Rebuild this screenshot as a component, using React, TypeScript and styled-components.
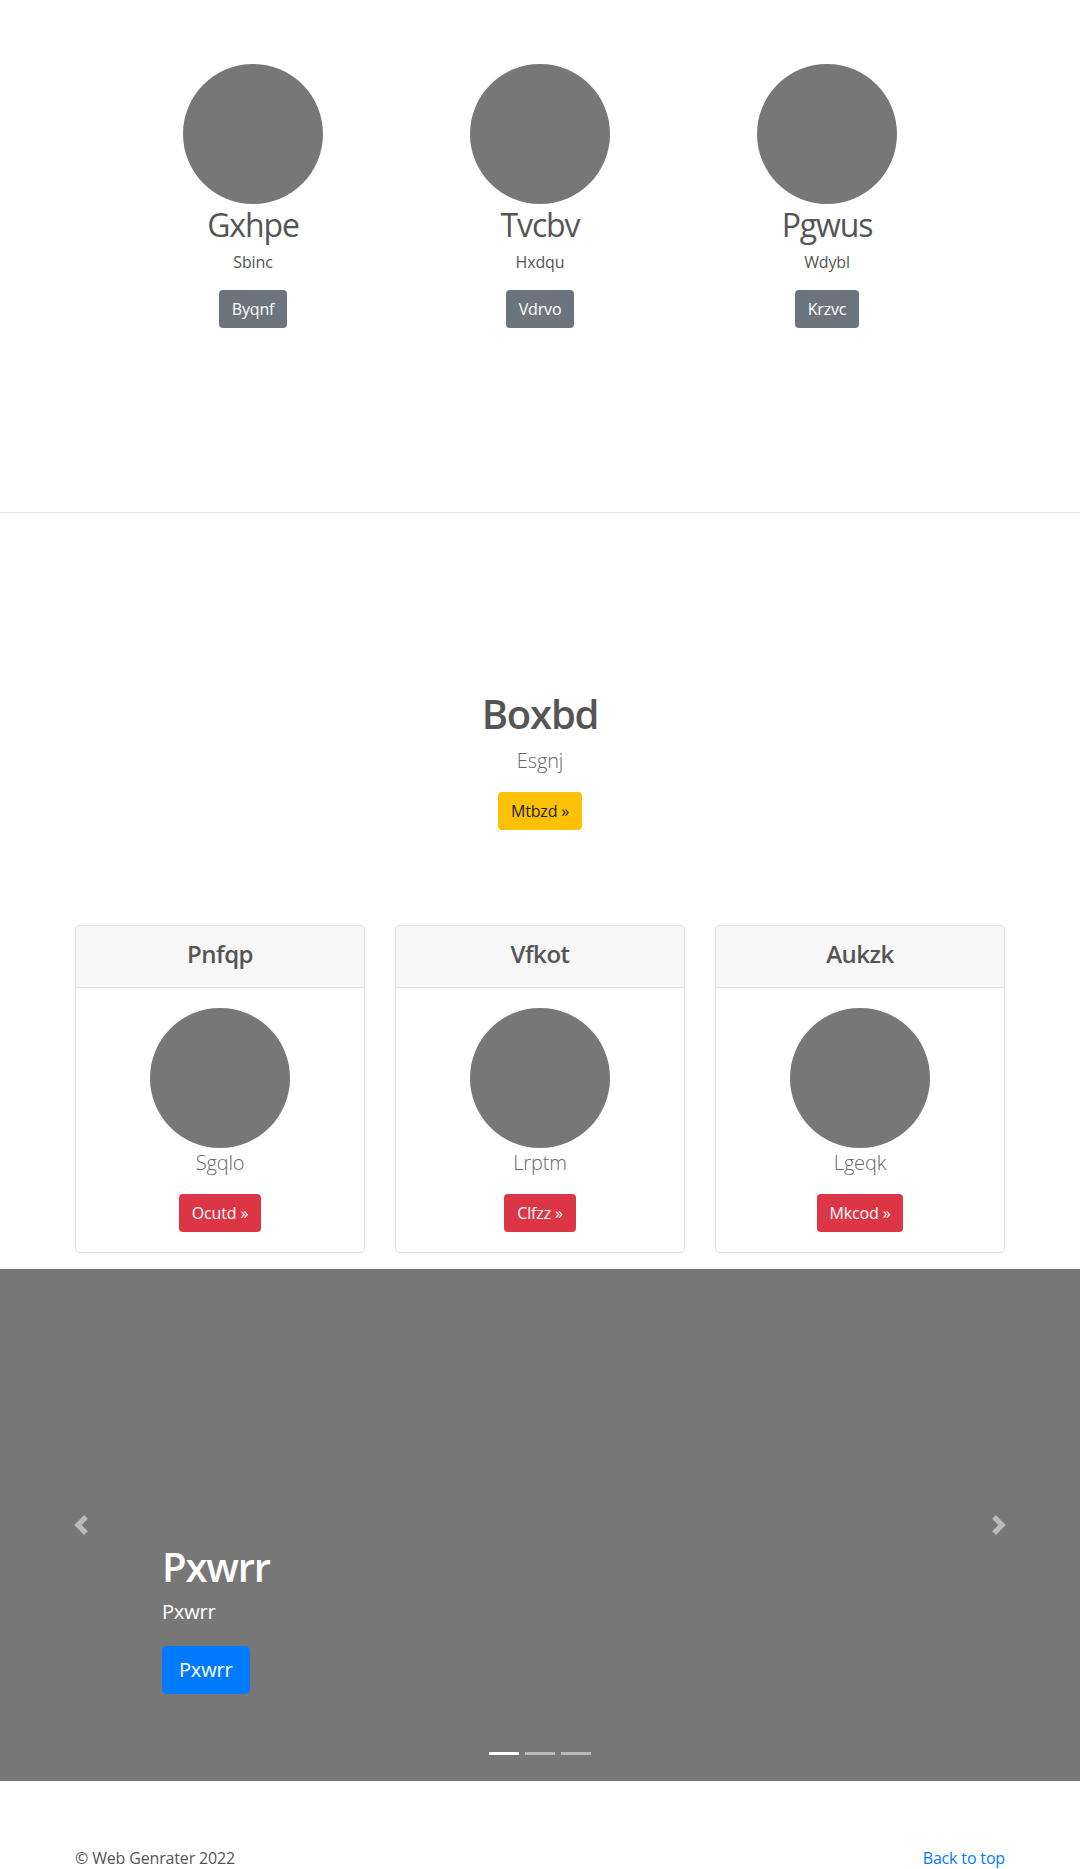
import React from "react";
import styled, { createGlobalStyle, css } from "styled-components";

const GlobalStyle = createGlobalStyle`
  html, body { margin: 0; padding: 0; background: #fff; }
  body {
    font-family: "Open Sans", "Noto Sans", "Liberation Sans", sans-serif;
    font-size: 16px;
    line-height: 1.5;
    color: #555;
    letter-spacing: -0.01em;
  }
  *, *::before, *::after { box-sizing: border-box; }
`;

type Variant = "secondary" | "warning" | "danger" | "primary";

const variants: Record<Variant, ReturnType<typeof css>> = {
  secondary: css`background: #6c757d; color: #fff;`,
  warning: css`background: #ffc107; color: #212529;`,
  danger: css`background: #dc3545; color: #fff;`,
  primary: css`background: #007bff; color: #fff;`,
};

const Button = styled.a<{ $variant: Variant; $large?: boolean }>`
  display: inline-block;
  border: 1px solid transparent;
  text-decoration: none;
  font-weight: 400;
  cursor: pointer;
  ${(p) => variants[p.$variant]}
  ${(p) =>
    p.$large
      ? css`padding: 8px 16px; font-size: 20px; line-height: 30px; border-radius: 5px;`
      : css`padding: 6px 12px; font-size: 16px; line-height: 24px; border-radius: 4px;`}
`;

const Avatar = styled.div`
  width: 140px;
  height: 140px;
  border-radius: 50%;
  background: #777;
  margin: 0 auto;
`;

/* ---------- Marketing columns ---------- */
const Marketing = styled.section`
  width: 861px;
  margin: 0 auto;
  padding: 64px 0 184px;
  display: grid;
  grid-template-columns: repeat(3, 1fr);
  text-align: center;
`;

const Feature = styled.div`
  display: flex;
  flex-direction: column;
  align-items: center;
`;

const FeatureTitle = styled.h2`
  margin: 2px 0 6px;
  font-size: 32px;
  line-height: 38.4px;
  font-weight: 400;
  letter-spacing: -0.035em;
  color: #555;
`;

const FeatureText = styled.p`
  margin: 0 0 16px;
  font-size: 16px;
  line-height: 24px;
`;

const Divider = styled.hr`
  margin: 0;
  border: 0;
  border-top: 1px solid #e5e5e5;
`;

/* ---------- Hero ---------- */
const Hero = styled.section`
  padding: 177px 0 95px;
  text-align: center;
  display: flex;
  flex-direction: column;
  align-items: center;
`;

const HeroTitle = styled.h1`
  margin: 0 0 8px;
  font-size: 40px;
  line-height: 48px;
  font-weight: 600;
  letter-spacing: -0.03em;
  color: #555;
`;

const Lead = styled.p`
  margin: 0 0 16px;
  font-size: 20px;
  line-height: 30px;
  font-weight: 300;
  color: #666;
`;

/* ---------- Cards ---------- */
const CardDeck = styled.section`
  width: 930px;
  margin: 0 auto 16px;
  display: grid;
  grid-template-columns: repeat(3, 1fr);
  gap: 30px;
`;

const Card = styled.div`
  border: 1px solid #dfdfdf;
  border-radius: 4px;
  overflow: hidden;
  text-align: center;
`;

const CardHeader = styled.div`
  background: #f7f7f7;
  border-bottom: 1px solid #dfdfdf;
  padding: 10px 20px 16px;
`;

const CardTitle = styled.h3`
  margin: 0;
  font-size: 24px;
  line-height: 35px;
  font-weight: 600;
  letter-spacing: -0.02em;
  color: #555;
`;

const CardBody = styled.div`
  padding: 20px;
  display: flex;
  flex-direction: column;
  align-items: center;
`;

/* ---------- Carousel ---------- */
const Carousel = styled.section`
  position: relative;
  height: 512px;
  background: #777;
  margin-bottom: 65px;
`;

const Caption = styled.div`
  position: absolute;
  left: 162px;
  right: 162px;
  bottom: 67px;
  padding: 20px 0;
  color: #fff;
  text-align: left;
`;

const CaptionTitle = styled.h1`
  margin: 0 0 6px;
  font-size: 40px;
  line-height: 48px;
  font-weight: 600;
  letter-spacing: -0.03em;
`;

const CaptionText = styled.p`
  margin: 0 0 19px;
  font-size: 20px;
  line-height: 30px;
`;

const Control = styled.a<{ $side: "left" | "right" }>`
  position: absolute;
  top: 0;
  bottom: 0;
  width: 162px;
  ${(p) => (p.$side === "left" ? "left: 0;" : "right: 0;")}
  display: flex;
  align-items: center;
  justify-content: center;
  opacity: 0.5;
  svg { width: 20px; height: 20px; display: block; }
`;

const Indicators = styled.ol`
  position: absolute;
  left: 0;
  right: 0;
  bottom: 26px;
  margin: 0;
  padding: 0;
  list-style: none;
  display: flex;
  justify-content: center;
  gap: 6px;
`;

const Indicator = styled.li<{ $active?: boolean }>`
  width: 30px;
  height: 3px;
  background: #fff;
  opacity: ${(p) => (p.$active ? 1 : 0.5)};
`;

/* ---------- Footer ---------- */
const Footer = styled.footer`
  width: 930px;
  margin: 0 auto;
  display: flex;
  justify-content: space-between;
  font-size: 16px;
  line-height: 24px;
  padding-bottom: 16px;
`;

const FooterLink = styled.a`
  color: #007bff;
  text-decoration: none;
`;

const features = [
  { title: "Gxhpe", text: "Sbinc", btn: "Byqnf" },
  { title: "Tvcbv", text: "Hxdqu", btn: "Vdrvo" },
  { title: "Pgwus", text: "Wdybl", btn: "Krzvc" },
];

const cards = [
  { title: "Pnfqp", text: "Sgqlo", btn: "Ocutd »" },
  { title: "Vfkot", text: "Lrptm", btn: "Clfzz »" },
  { title: "Aukzk", text: "Lgeqk", btn: "Mkcod »" },
];

export default function App() {
  return (
    <>
      <GlobalStyle />
      <Marketing>
        {features.map((f) => (
          <Feature key={f.title}>
            <Avatar />
            <FeatureTitle>{f.title}</FeatureTitle>
            <FeatureText>{f.text}</FeatureText>
            <Button $variant="secondary">{f.btn}</Button>
          </Feature>
        ))}
      </Marketing>
      <Divider />
      <Hero>
        <HeroTitle>Boxbd</HeroTitle>
        <Lead>Esgnj</Lead>
        <Button $variant="warning">Mtbzd »</Button>
      </Hero>
      <CardDeck>
        {cards.map((c) => (
          <Card key={c.title}>
            <CardHeader>
              <CardTitle>{c.title}</CardTitle>
            </CardHeader>
            <CardBody>
              <Avatar />
              <Lead>{c.text}</Lead>
              <Button $variant="danger">{c.btn}</Button>
            </CardBody>
          </Card>
        ))}
      </CardDeck>
      <Carousel>
        <Control $side="left">
          <svg viewBox="0 0 8 8" fill="#fff">
            <path d="M5.25 0l-4 4 4 4 1.5-1.5-2.5-2.5 2.5-2.5-1.5-1.5z" />
          </svg>
        </Control>
        <Control $side="right">
          <svg viewBox="0 0 8 8" fill="#fff">
            <path d="M2.75 0l-1.5 1.5 2.5 2.5-2.5 2.5 1.5 1.5 4-4-4-4z" />
          </svg>
        </Control>
        <Caption>
          <CaptionTitle>Pxwrr</CaptionTitle>
          <CaptionText>Pxwrr</CaptionText>
          <Button $variant="primary" $large>Pxwrr</Button>
        </Caption>
        <Indicators>
          <Indicator $active />
          <Indicator />
          <Indicator />
        </Indicators>
      </Carousel>
      <Footer>
        <span>© Web Genrater 2022</span>
        <FooterLink href="#">Back to top</FooterLink>
      </Footer>
    </>
  );
}
